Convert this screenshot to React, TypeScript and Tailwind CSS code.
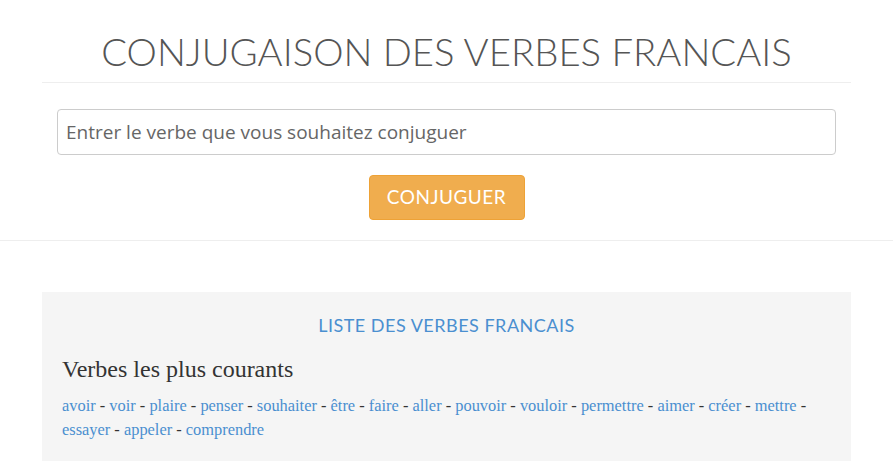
import React from "react";

const verbs = [
  "avoir","voir","plaire","penser","souhaiter","être","faire","aller","pouvoir","vouloir","permettre","aimer","créer","mettre","essayer","appeler","comprendre",
];

export default function App() {
  return (
    <div className="min-h-[473px] bg-white">
      <div className="mx-auto w-[809px]">
        <h1
          className="pt-[27px] pb-[7px] text-center text-[38.3px] leading-[48px] font-light text-[#555] border-b border-[#eee]"
          style={{ fontFamily: "Lato, 'Open Sans', sans-serif" }}
        >
          CONJUGAISON DES VERBES FRANCAIS
        </h1>
        <div className="px-[15px] pt-[26px]">
          <div
            className="h-[46px] rounded-[4px] border border-[#ccc] bg-white px-[8px] flex items-center text-[19px] text-[#666]"
            style={{ fontFamily: "'Open Sans', 'DejaVu Sans', sans-serif" }}
          >
            Entrer le verbe que vous souhaitez conjuguer
          </div>
          <div className="flex justify-center pt-[20px] pb-[20px]">
            <button
              className="h-[45px] w-[156px] rounded-[4px] border border-[#eea236] bg-[#f0ad4e] text-white text-[19px] tracking-[0.5px]"
              style={{ fontFamily: "Lato, 'Open Sans', sans-serif" }}
            >
              CONJUGUER
            </button>
          </div>
        </div>
      </div>
      <div className="border-t border-[#eee]" />
      <div className="mx-auto w-[809px] mt-[51px] bg-[#f5f5f5] px-[20px] pt-[20px] pb-[20px] h-[169px]">
        <h2
          className="text-center text-[18px] leading-[26px] text-[#4a8fd0] tracking-[0.5px]"
          style={{ fontFamily: "Lato, 'Open Sans', sans-serif" }}
        >
          LISTE DES VERBES FRANCAIS
        </h2>
        <h3
          className="mt-[17px] text-[24px] leading-[28px] text-[#333]"
          style={{ fontFamily: "'Liberation Serif', serif" }}
        >
          Verbes les plus courants
        </h3>
        <p
          className="mt-[11px] text-[16.4px] leading-[24px] text-[#333]"
          style={{ fontFamily: "'Liberation Serif', serif" }}
        >
          {verbs.map((v, i) => (
            <React.Fragment key={v}>
              <a href="#" className="text-[#4a8fd0]">{v}</a>
              {i < verbs.length - 1 ? " - " : ""}
            </React.Fragment>
          ))}
        </p>
      </div>
    </div>
  );
}
